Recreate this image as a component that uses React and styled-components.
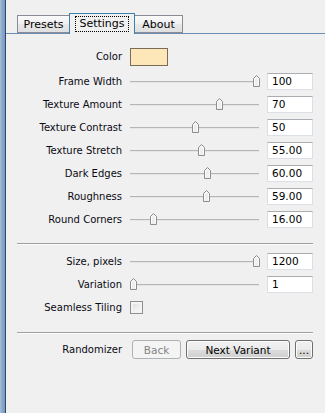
import styled, { createGlobalStyle } from "styled-components"

const GlobalStyle = createGlobalStyle`
  html, body {
    margin: 0;
    padding: 0;
    background: #f0f0f0;
  }
  body {
    font-family: "DejaVu Sans", "Liberation Sans", sans-serif;
    font-size: 10px;
    color: #000;
  }
`

const Window = styled.div`
  display: flex;
  width: 325px;
  height: 413px;
  overflow: hidden;
`

const Edge = styled.div`
  flex-shrink: 0;
  width: 5px;
  background: linear-gradient(to right, #a9bfdb 0, #8ba8cc 40%, #7b9bc3 100%);
  border-right: 1px solid #2d4766;
`

const Pane = styled.div`
  flex: 1;
  min-width: 0;
  padding-top: 13px;
`

const TabRow = styled.div`
  display: flex;
  align-items: flex-end;
  padding-left: 11px;
  height: 20px;
  border-bottom: 1px solid #6a8db5;
`

const Tab = styled.div`
  box-sizing: border-box;
  width: ${p => p.w}px;
  height: ${p => (p.active ? 21 : 18)}px;
  margin-bottom: ${p => (p.active ? -1 : 0)}px;
  border: 1px solid ${p => (p.active ? "#3c7fb1" : "#898c95")};
  border-bottom: ${p => (p.active ? "none" : "1px solid #898c95")};
  ${p => p.right && "border-left: none;"}
  ${p => p.left && "border-right: none;"}
  background: ${p =>
    p.active ? "#f0f0f0" : "linear-gradient(to bottom, #fafafa 0, #f0f0f0 50%, #e8e8e8 51%, #e0e0e0 100%)"};
  display: flex;
  align-items: center;
  justify-content: center;
  font-size: 11px;
  padding-top: ${p => (p.active ? 0 : 1)}px;
  span {
    padding: 0 3px;
    line-height: 14px;
    outline: ${p => (p.active ? "1px dotted #000" : "none")};
  }
`

const Content = styled.div`
  padding: 14px 12px 0 11px;
`

const Section = styled.div`
  display: flex;
  flex-direction: column;
  gap: 6px;
`

const Row = styled.div`
  display: flex;
  align-items: center;
  height: ${p => (p.auto ? "auto" : "17px")};
  margin-bottom: ${p => p.mb || 0}px;
`

const Label = styled.div`
  flex-shrink: 0;
  width: 105px;
  margin-right: ${p => p.gap || 8}px;
  text-align: right;
  white-space: nowrap;
  font-size: 10px;
  color: #0a0a14;
`

const Swatch = styled.div`
  box-sizing: border-box;
  width: 38px;
  height: 18px;
  background: #fde6b8;
  border: 1px solid #7b6c55;
`

const Slider = styled.div`
  position: relative;
  flex-shrink: 0;
  width: 132px;
  height: 17px;
  margin-right: 5px;
  &::before {
    content: "";
    position: absolute;
    left: 0;
    right: 3px;
    top: 8px;
    height: 1px;
    background: #b5b5b5;
    border-bottom: 1px solid #e6e6e6;
  }
`

const Thumb = styled.svg`
  position: absolute;
  top: 2px;
`

const Field = styled.div`
  box-sizing: border-box;
  flex-shrink: 0;
  width: 46px;
  height: 17px;
  background: #fff;
  border: 1px solid #dbdfe6;
  border-top-color: #abadb3;
  padding-left: 4px;
  line-height: 14px;
  font-size: 10.5px;
`

const Divider = styled.div`
  height: 1px;
  background: #a0a0a0;
  border-bottom: 1px solid #fcfcfc;
  margin: ${p => p.m};
`

const Check = styled.div`
  box-sizing: border-box;
  width: 13px;
  height: 13px;
  border: 1px solid #8e8f8f;
  background: linear-gradient(135deg, #dcdcdc, #fdfdfd);
  box-shadow: inset 0 0 0 2px #f4f4f4;
`

const Buttons = styled.div`
  display: flex;
  gap: 5px;
  margin-left: 2px;
`

const Button = styled.div`
  box-sizing: border-box;
  flex-shrink: 0;
  width: ${p => p.w}px;
  height: 19px;
  border-radius: 3px;
  display: flex;
  align-items: center;
  justify-content: center;
  font-size: 10.5px;
  border: 1px solid ${p => (p.disabled ? "#adb2b5" : "#707070")};
  color: ${p => (p.disabled ? "#838383" : "#000")};
  background: ${p =>
    p.disabled ? "#f4f4f4" : "linear-gradient(to bottom, #f2f2f2 0, #ebebeb 50%, #dddddd 51%, #cfcfcf 100%)"};
  box-shadow: inset 0 0 0 1px ${p => (p.disabled ? "#f4f4f4" : "#fcfcfc")};
`

const sliders = [
  { label: "Frame Width", pos: 1, value: "100" },
  { label: "Texture Amount", pos: 0.7, value: "70" },
  { label: "Texture Contrast", pos: 0.5, value: "50" },
  { label: "Texture Stretch", pos: 0.55, value: "55.00" },
  { label: "Dark Edges", pos: 0.6, value: "60.00" },
  { label: "Roughness", pos: 0.59, value: "59.00" },
  { label: "Round Corners", pos: 0.16, value: "16.00" },
]

const sliders2 = [
  { label: "Size, pixels", pos: 1, value: "1200" },
  { label: "Variation", pos: 0, value: "1" },
]

const SliderRow = ({ label, pos, value }) => (
  <Row>
    <Label>{label}</Label>
    <Slider>
      <Thumb width="7" height="12" viewBox="0 0 7 12" style={{ left: Math.round(pos * 123) }}>
        <path d="M0.5 11.5 V3.5 L3.5 0.5 L6.5 3.5 V11.5 Z" fill="#eeeeee" stroke="#8d8d8d" />
        <path d="M1.5 10.5 V4 L3.5 2 L5.5 4 V10.5" fill="none" stroke="#ffffff" />
      </Thumb>
    </Slider>
    <Field>{value}</Field>
  </Row>
)

const App = () => {
  return (
    <>
      <GlobalStyle />
      <Window>
        <Edge />
        <Pane>
          <TabRow>
            <Tab w={52} left>Presets</Tab>
            <Tab w={66} active><span>Settings</span></Tab>
            <Tab w={48} right>About</Tab>
          </TabRow>
          <Content>
            <Section>
              <Row mb={2}>
                <Label>Color</Label>
                <Swatch />
              </Row>
              {sliders.map(s => <SliderRow key={s.label} {...s} />)}
            </Section>
            <Divider m="15px 0 8px" />
            <Section>
              {sliders2.map(s => <SliderRow key={s.label} {...s} />)}
              <Row>
                <Label>Seamless Tiling</Label>
                <Check />
              </Row>
            </Section>
            <Divider m="16px 0 6px" />
            <Row auto>
              <Label>Randomizer</Label>
              <Buttons>
                <Button w={49} disabled>Back</Button>
                <Button w={104}>Next Variant</Button>
                <Button w={18}>...</Button>
              </Buttons>
            </Row>
          </Content>
        </Pane>
      </Window>
    </>
  )
}

export default App
